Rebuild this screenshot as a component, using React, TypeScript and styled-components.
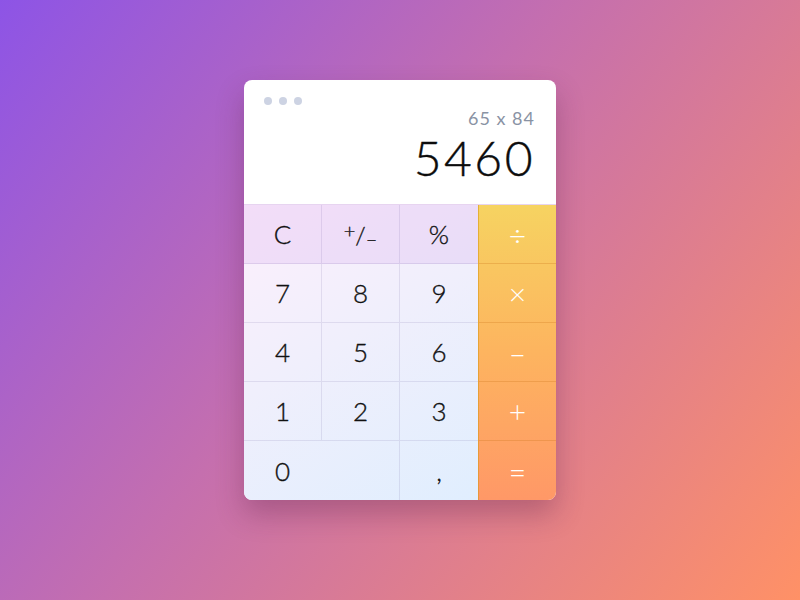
import styled, { createGlobalStyle } from 'styled-components';

const GlobalStyle = createGlobalStyle`
  html, body {
    margin: 0;
    padding: 0;
    height: 100%;
  }
  body {
    background: linear-gradient(128deg, #8d54e6 0%, #c56fae 45%, #ff9166 100%);
    font-family: Lato, 'Noto Sans', 'Liberation Sans', sans-serif;
    overflow: hidden;
  }
`;

const Page = styled.div`
  width: 800px;
  height: 600px;
  display: flex;
  justify-content: center;
  align-items: flex-start;
  padding-top: 80px;
  box-sizing: border-box;
`;

const Card = styled.div`
  width: 312px;
  border-radius: 8px;
  overflow: hidden;
  background: #fff;
  box-shadow: 0 14px 28px rgba(90, 30, 70, 0.32);
`;

const Display = styled.div`
  height: 124px;
  box-sizing: border-box;
  padding: 17px 21px 0 20px;
  display: flex;
  flex-direction: column;
`;

const Dots = styled.div`
  display: flex;
  gap: 7px;
`;

const Dot = styled.span`
  width: 8px;
  height: 8px;
  border-radius: 50%;
  background: #cdd3e3;
`;

const Expression = styled.div`
  align-self: flex-end;
  margin-top: 3px;
  font-size: 18px;
  letter-spacing: 1px;
  color: #8a93a4;
  line-height: 20px;
`;

const Result = styled.div`
  align-self: flex-end;
  margin-top: 5px;
  font-size: 48px;
  font-weight: 300;
  letter-spacing: 2.5px;
  color: #0c0c0c;
  line-height: 50px;
  -webkit-text-stroke: 0.4px #0c0c0c;
`;

const Keypad = styled.div`
  display: flex;
  border-top: 1px solid #e7d4f0;
`;

const NumPad = styled.div`
  width: 234px;
  display: grid;
  grid-template-columns: repeat(3, 1fr);
  grid-template-rows: repeat(5, 59px);
  background: linear-gradient(150deg, #fdeffc 0%, #f0effc 45%, #e0eefe 100%);
`;

const Key = styled.div<{ $fn?: boolean; $wide?: boolean; $lastCol?: boolean; $lastRow?: boolean }>`
  display: flex;
  align-items: center;
  justify-content: center;
  font-size: 26px;
  font-weight: 300;
  color: #111;
  -webkit-text-stroke: 0.35px #111;
  box-sizing: border-box;
  border-right: ${p => (p.$lastCol ? 'none' : '1px solid rgba(95, 80, 150, 0.13)')};
  border-bottom: ${p => (p.$lastRow ? 'none' : '1px solid rgba(95, 80, 150, 0.13)')};
  background: ${p => (p.$fn ? 'rgba(205, 150, 235, 0.2)' : 'transparent')};
  grid-column: ${p => (p.$wide ? 'span 2' : 'auto')};
  padding-right: ${p => (p.$wide ? '78px' : '0')};
`;

const Sign = styled.span`
  display: inline-flex;
  align-items: center;
  font-size: 24px;
`;

const Sup = styled.span<{ $down?: boolean }>`
  font-size: 20px;
  position: relative;
  top: ${p => (p.$down ? '4px' : '-4px')};
`;

const OpColumn = styled.div`
  width: 78px;
  display: flex;
  flex-direction: column;
  background: linear-gradient(180deg, #f6d361 0%, #fdb45f 50%, #ff9867 100%);
  border-left: 1px solid rgba(215, 150, 20, 0.55);
  box-sizing: border-box;
`;

const OpKey = styled.div<{ $last?: boolean }>`
  height: 59px;
  display: flex;
  align-items: center;
  justify-content: center;
  font-size: 30px;
  font-weight: 300;
  color: #fff;
  box-sizing: border-box;
  border-bottom: ${p => (p.$last ? 'none' : '1px solid rgba(205, 120, 30, 0.3)')};
`;

const rows = [
  ['C', 'sign', '%'],
  ['7', '8', '9'],
  ['4', '5', '6'],
  ['1', '2', '3'],
];

const ops = ['\u00f7', '\u00d7', '\u2013', '+', '='];

export default function App() {
  return (
    <>
      <GlobalStyle />
      <Page>
        <Card>
          <Display>
            <Dots>
              <Dot />
              <Dot />
              <Dot />
            </Dots>
            <Expression>65 x 84</Expression>
            <Result>5460</Result>
          </Display>
          <Keypad>
            <NumPad>
              {rows.map((row, r) =>
                row.map((label, c) => (
                  <Key key={label} $fn={r === 0} $lastCol={c === 2}>
                    {label === 'sign' ? (
                      <Sign>
                        <Sup>+</Sup>/<Sup $down>{'\u2013'}</Sup>
                      </Sign>
                    ) : (
                      label
                    )}
                  </Key>
                ))
              )}
              <Key $wide $lastRow>0</Key>
              <Key $lastCol $lastRow>,</Key>
            </NumPad>
            <OpColumn>
              {ops.map((op, i) => (
                <OpKey key={op} $last={i === ops.length - 1}>
                  {op}
                </OpKey>
              ))}
            </OpColumn>
          </Keypad>
        </Card>
      </Page>
    </>
  );
}
